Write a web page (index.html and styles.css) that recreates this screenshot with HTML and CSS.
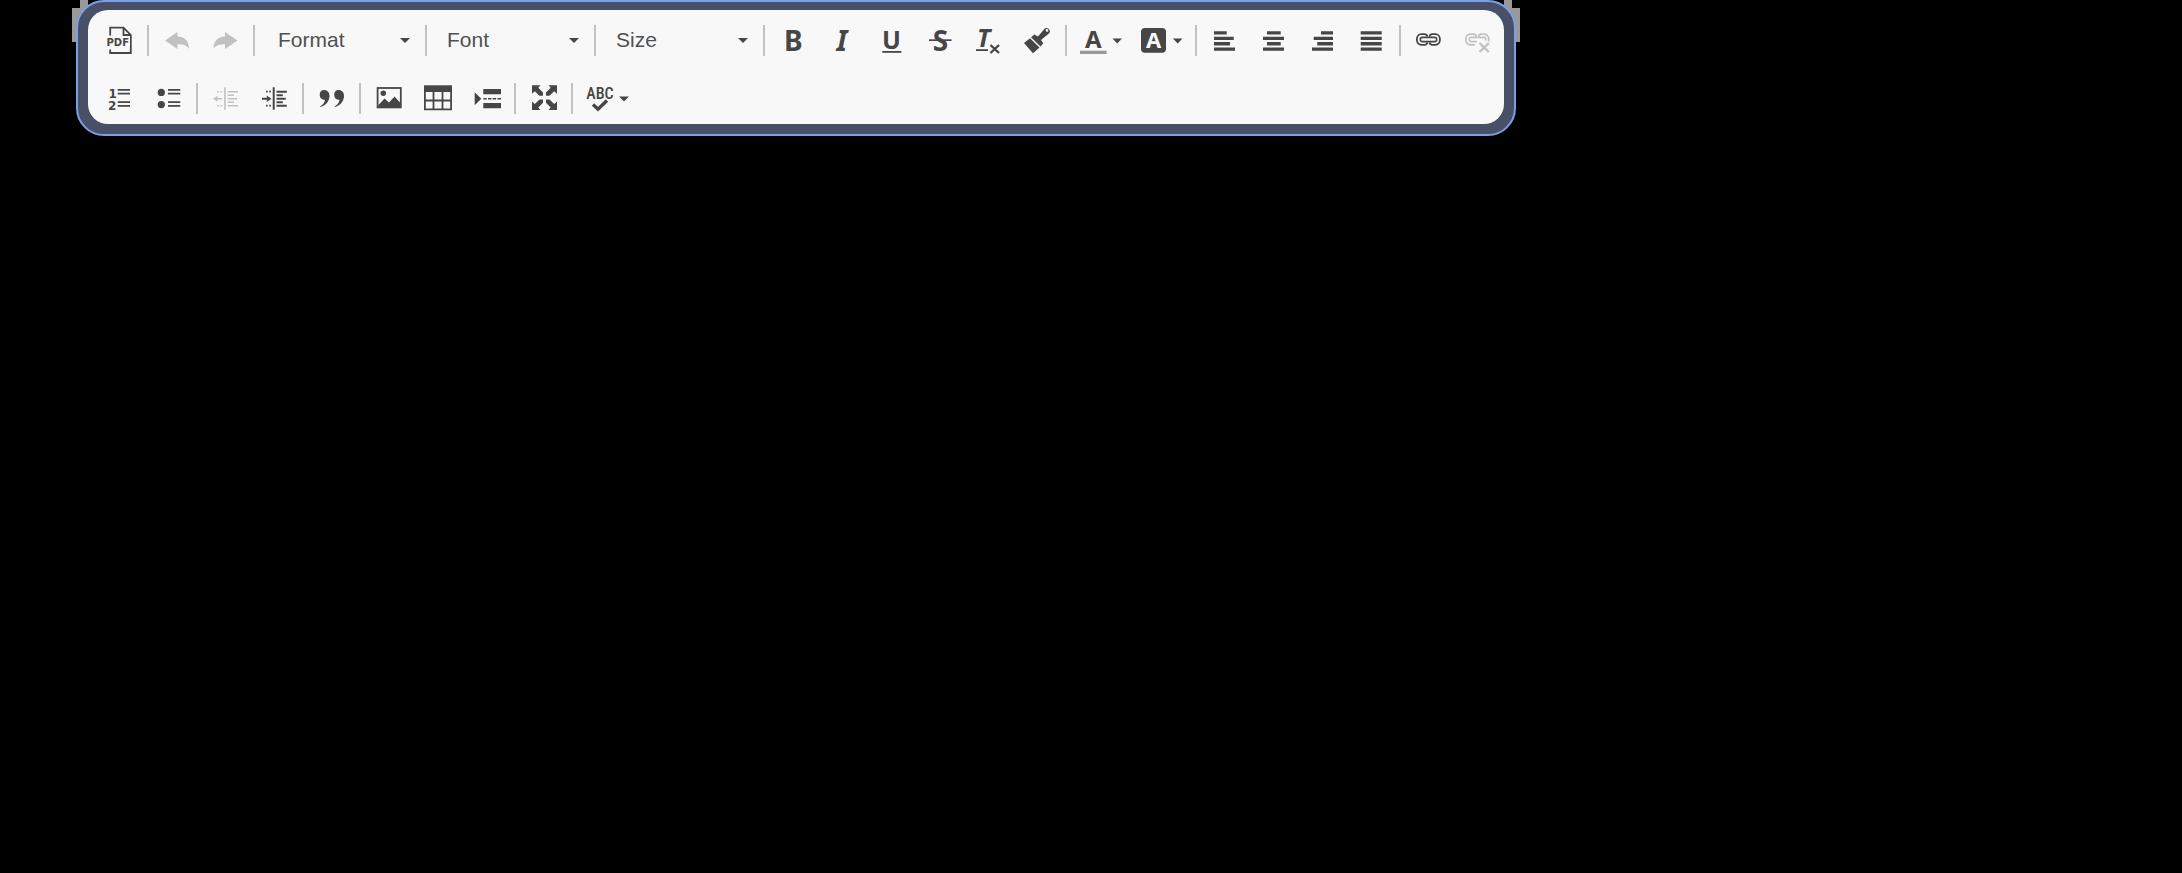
FILE: index.html
```html
<!DOCTYPE html>
<html lang="en">
<head>
<meta charset="utf-8">
<title>Editor toolbar</title>
<link rel="stylesheet" href="styles.css">
</head>
<body>
<main class="stage">
<div class="frame">
<div class="toolbar" role="toolbar" aria-label="Editor toolbar">
<div class="row">
<button class="btn" aria-label="Export to PDF"><svg viewBox="0 0 49 44"><path class="line" d="M15.2 17.500V9.600H28.500L35.800 17V35H15.200V31.500M28.500 9.600V17H35.800"/><path class="gap" d="M33 19.500H38V28.500H33Z"/><text x="11.500" y="27.700" class="t-pdf">PDF</text><path d="M35 19H36.700V29H35Z"/></svg></button>
<span class="sep"></span>
<button class="btn" disabled aria-label="Undo"><svg viewBox="0 0 49 44"><path d="M13 22.500L25.500 14V18.500C32 18.500 37 22.500 37 31C34.500 27 30.500 26.300 25.500 26.300V31Z"/></svg></button>
<button class="btn" disabled aria-label="Redo"><svg viewBox="0 0 49 44"><path d="M36.500 22.500L24 14V18.500C17.500 18.500 12.500 22.500 12.500 31C15 27 19 26.300 24 26.300V31Z"/></svg></button>
<span class="sep"></span>
<div class="combo first"><select aria-label="Format"><option>Format</option></select><svg class="caret" viewBox="0 0 10 5"><path d="M0 0H10L5 5Z"/></svg></div>
<span class="sep"></span>
<div class="combo"><select aria-label="Font"><option>Font</option></select><svg class="caret" viewBox="0 0 10 5"><path d="M0 0H10L5 5Z"/></svg></div>
<span class="sep"></span>
<div class="combo"><select aria-label="Size"><option>Size</option></select><svg class="caret" viewBox="0 0 10 5"><path d="M0 0H10L5 5Z"/></svg></div>
<span class="sep"></span>
<button class="btn" aria-label="Bold"><svg viewBox="0 0 49 44"><text x="16" y="32.500" class="t-b">B</text></svg></button>
<button class="btn" aria-label="Italic"><svg viewBox="0 0 49 44"><text x="19.500" y="32.500" class="t-b t-i">I</text></svg></button>
<button class="btn" aria-label="Underline"><svg viewBox="0 0 49 44"><text x="25.500" y="30.500" text-anchor="middle" class="t-u">U</text><path d="M16.300 33H35.300V34.800H16.300Z"/></svg></button>
<button class="btn" aria-label="Strikethrough"><svg viewBox="0 0 49 44"><text x="25.500" y="32.500" text-anchor="middle" class="t-b">S</text><path d="M14 21.300H36.500V23H14Z"/></svg></button>
<button class="btn" aria-label="Remove format"><svg viewBox="0 0 49 44"><text x="13" y="29" class="t-u t-i">T</text><path d="M12 31.200H24V33H12Z"/><path class="thick" d="M26.500 27L35 35M35 27L26.500 35"/></svg></button>
<button class="btn" aria-label="Copy formatting"><svg viewBox="0 0 49 44"><path d="M11 25L17 20.300L26.500 29.500L20 35.300Z"/><path d="M18 19.300L21.500 16.500L25 18.600L31.800 10.500A3.400 3.400 0 0 1 36.500 15L28 22L30.300 25.300L27.500 28.600Z"/><circle class="gap" cx="34" cy="12.400" r="1.300"/></svg></button>
<span class="sep"></span>
<button class="btn wide" aria-label="Text color"><svg viewBox="0 0 61 44"><text x="23.300" y="29.500" text-anchor="middle" class="t-a">A</text><path class="swatch" d="M10 32.700H36.700V36H10Z"/><path d="M42.500 20.500H52L47.200 25.500Z"/></svg></button>
<button class="btn wide" aria-label="Background color"><svg viewBox="0 0 61 44"><rect x="10" y="10" width="25" height="24.700" rx="4"/><text x="22.500" y="30.300" text-anchor="middle" class="t-bg">A</text><path d="M42 20.500H51.500L46.700 25.500Z"/></svg></button>
<span class="sep"></span>
<button class="btn" aria-label="Align left"><svg viewBox="0 0 49 44"><path d="M14 13.300h12.700v3.300H14zM14 18.800h19.700v3.300H14zM14 24.100h16v3.300H14zM14 29.400h21v3.300H14z"/></svg></button>
<button class="btn" aria-label="Center"><svg viewBox="0 0 49 44"><path d="M18 13.300h13.700v3.300H18zM14 18.800h21v3.300H14zM18 24.100h13.700v3.300H18zM14 29.400h21v3.300H14z"/></svg></button>
<button class="btn" aria-label="Align right"><svg viewBox="0 0 49 44"><path d="M23 13.300h12v3.300H23zM15.700 18.800H35v3.300H15.700zM19.300 24.100H35v3.300H19.300zM14 29.400h21v3.300H14z"/></svg></button>
<button class="btn" aria-label="Justify"><svg viewBox="0 0 49 44"><path d="M13.700 13.300h21v3.300h-21zM13.700 18.800h21v3.300h-21zM13.700 24.100h21v3.300h-21zM13.700 29.400h21v3.300h-21z"/></svg></button>
<span class="sep"></span>
<button class="btn" aria-label="Link"><svg viewBox="0 0 49 44"><path class="line" d="M23.300 18.500C23 16.800 22 16.200 20.500 16.200H17.500C11.300 16.200 11.300 26.800 17.500 26.800H20.500C22 26.800 23 26.200 23.300 24.500M25.500 18.500C25.800 16.800 26.800 16.200 28.300 16.200H31.300C37.500 16.200 37.500 26.800 31.300 26.800H28.300C26.800 26.800 25.800 26.200 25.500 24.500"/><rect class="bar" x="16.300" y="19.400" width="16.400" height="4.200" rx="2"/></svg></button>
<button class="btn" disabled aria-label="Unlink"><svg viewBox="0 0 49 44"><path class="line" d="M23.300 18.500C23 16.800 22 16.200 20.500 16.200H17.500C11.300 16.200 11.300 26.800 17.500 26.800H22M25.500 18.500C25.800 16.800 26.800 16.200 28.300 16.200H31.300C35 16.200 36.500 20 35.500 23.500"/><path class="bar" d="M24 23.600H18.300C15.700 23.600 15.700 19.400 18.300 19.400H30.700C32.700 19.400 33 21 32.500 22.500"/><path class="thick" d="M26.500 25L35.800 34M35.800 25L26.500 34"/></svg></button>
</div>
<div class="row">
<button class="btn" aria-label="Numbered list"><svg viewBox="0 0 49 44"><text x="13.500" y="22" class="t-n">1</text><text x="13" y="34" class="t-n">2</text><path d="M22.700 13H35v1.700H22.700zM22.700 16.800H35v1.700H22.700zM22.700 25.200H35v1.700H22.700zM22.700 29H35v1.700H22.700z"/></svg></button>
<button class="btn" aria-label="Bulleted list"><svg viewBox="0 0 49 44"><circle cx="17.300" cy="16.400" r="3.600"/><circle cx="17.300" cy="28.600" r="3.600"/><path d="M24 13h12.300v1.700H24zM24 16.800h12.300v1.700H24zM24 25.200h12.300v1.700H24zM24 29h12.300v1.700H24z"/></svg></button>
<span class="sep"></span>
<button class="btn" disabled aria-label="Decrease indent"><svg viewBox="0 0 49 44"><path d="M23.200 11.300h1.600v22.400h-1.600zM26.700 15h10.300v1.500H26.700zM26.700 18.500h6.300v1.500H26.700zM26.700 22h9.300v1.500h-9.300zM26.700 25.500h6.300v1.500h-6.300zM26.700 29h10.300v1.500H26.700zM16.300 15h1.700v1.500h-1.700zM19.500 15h1.700v1.500h-1.700zM16.300 29h1.700v1.500h-1.700zM19.500 29h1.700v1.500h-1.700zM12 22.700l4.500-3v2.300H21v1.500h-4.500v2.300z"/></svg></button>
<button class="btn" aria-label="Increase indent"><svg viewBox="0 0 49 44"><path d="M22.700 11.300h2v22.400h-2zM26.500 14.700h10.300v2H26.500zM26.500 18.200h6.300v2h-6.300zM26.500 21.700h9.300v2h-9.300zM26.500 25.200h6.300v2h-6.300zM26.500 28.700h10.300v2H26.500zM16 14.800h1.700v1.800H16zM19.200 14.800h1.700v1.800h-1.700zM16 28.800h1.700v1.800H16zM19.200 28.800h1.700v1.800h-1.700zM21.500 22.700l-4.700-3.200v2.200H12v2h4.800v2.200z"/></svg></button>
<span class="sep"></span>
<button class="btn" aria-label="Block quote"><svg viewBox="0 0 49 44"><path d="M17 14C20.500 14 22.500 16.500 22.500 20C22.500 25 19 29.500 13.500 31L13.200 30.200C16 28.700 17.800 26.500 18 23.500C15 24.500 12.700 22 12.700 18.800C12.700 16 14.500 14 17 14ZM31.500 14C35 14 37 16.500 37 20C37 25 33.500 29.500 28 31L27.700 30.200C30.500 28.700 32.300 26.500 32.500 23.500C29.500 24.500 27.200 22 27.200 18.800C27.200 16 29 14 31.500 14Z"/></svg></button>
<span class="sep"></span>
<button class="btn" aria-label="Image"><svg viewBox="0 0 49 44"><rect class="line" x="13.600" y="12" width="23.200" height="19.400"/><circle cx="19.300" cy="17.300" r="2.700"/><path d="M14.500 29L20.500 22.500L25 26.500L30.500 20.500L36 26.500V31.500H14.500Z"/></svg></button>
<button class="btn" aria-label="Table"><svg viewBox="0 0 49 44"><path d="M11 9.300H39V16H11Z"/><path class="line" d="M11.900 15V33.300H38.100V15M12 24.500H38M20.500 15V33M29.500 15V33"/></svg></button>
<button class="btn" aria-label="Page break"><svg viewBox="0 0 49 44"><path d="M12.700 16.300L19.300 22.700L12.700 29.300ZM21.300 13H39v5.300H21.300zM21.300 27H39v5.200H21.300zM21.300 22h3.500v1.500h-3.500zM26 22h3.500v1.500H26zM30.700 22h3.500v1.500h-3.500zM35.500 22H39v1.500h-3.500z"/></svg></button>
<span class="sep"></span>
<button class="btn" aria-label="Maximize"><svg viewBox="0 0 49 44"><path d="M13 9.300H21.500L19.300 11.800L24 16.500V19.800H20.500L15.800 15.200L13 17.800ZM38 9.300H29.500L31.700 11.800L27 16.500V19.800H30.500L35.200 15.200L38 17.800ZM13 34H21.500L19.300 31.500L24 26.800V23.500H20.500L15.800 28.100L13 25.500ZM38 34H29.500L31.700 31.500L27 26.800V23.500H30.500L35.200 28.100L38 25.500Z"/></svg></button>
<span class="sep"></span>
<button class="btn wide" aria-label="Spell check"><svg viewBox="0 0 61 44"><text x="24" y="23" text-anchor="middle" class="t-abc">ABC</text><path class="check" d="M17 28.500L22 33.200L31 24.500"/><path d="M43 20.500H53L48 25.500Z"/></svg></button>
</div>
</div>
</div>
</main>
</body>
</html>
```
FILE: styles.css
```css
* { box-sizing: border-box; }

body {
  margin: 0;
  min-height: 100vh;
  background: #000;
  overflow: hidden;
  font-family: "Liberation Sans", Arial, sans-serif;
}

.stage {
  isolation: isolate;
  padding-left: 76px;
}

.frame {
  position: relative;
  width: fit-content;
  border: 2px solid #7d9fe8;
  border-radius: 28px;
  background: #485067;
  padding: 8px 10px 10px;
}

/* Grey corners of the panel that shows behind the frame */
.frame::before,
.frame::after {
  content: "";
  position: absolute;
  z-index: -1;
  top: 6px;
  width: 8px;
  height: 34px;
  background: #999;
}

.frame::before { left: -6px; box-shadow: 8px -8px 0 #999; }
.frame::after { right: -6px; box-shadow: -8px -8px 0 #999; }

.toolbar {
  display: flex;
  flex-direction: column;
  gap: 14px;
  padding: 8px 2px 4px 7px;
  border-radius: 20px;
  background: #f8f8f8;
}

.row { display: flex; align-items: center; }

.btn {
  flex: none;
  width: 49px;
  height: 44px;
  padding: 0;
  border: 0;
  background: none;
  color: #464646;
}

.btn.wide { width: 61px; }
.btn:disabled { color: #c1c1c1; }
.btn svg { display: block; width: 100%; height: 100%; fill: currentColor; }

.sep {
  flex: none;
  width: 2px;
  height: 31px;
  margin: 0 3px;
  background: #c2c2c2;
}

.combo { position: relative; flex: none; width: 161px; height: 44px; }
.combo.first { margin-left: 3px; }

.combo select {
  appearance: none;
  width: 100%;
  height: 100%;
  padding: 0 28px 2px 17px;
  border: 0;
  background: none;
  color: #505050;
  font: 21px "Liberation Sans", Arial, sans-serif;
}

.caret {
  position: absolute;
  top: 20px;
  right: 12px;
  width: 10px;
  height: 5px;
  fill: #464646;
  pointer-events: none;
}

.btn .line { fill: none; stroke: currentColor; stroke-width: 1.8; }
.btn .bar { fill: #f8f8f8; stroke: currentColor; stroke-width: 1.6; }
.btn .thick { fill: none; stroke: currentColor; stroke-width: 2.4; }
.btn .check { fill: none; stroke: currentColor; stroke-width: 3.4; }
.btn .gap { fill: #f8f8f8; }
.btn .swatch { fill: #999; }

.t-pdf { font: bold 10px "DejaVu Sans", sans-serif; }
.t-b { font: bold 28px "Noto Sans", sans-serif; }
.t-u { font: bold 25px "Noto Sans", sans-serif; }
.btn .t-i { font-style: italic; }
.t-a { font: bold 24px "Noto Sans", sans-serif; }
.t-bg { font: bold 22px "Noto Sans", sans-serif; fill: #f8f8f8; }
.t-n { font: bold 12px "DejaVu Sans", sans-serif; }
.t-abc { font: 500 16px "DejaVu Sans Condensed", "Roboto Condensed", sans-serif; font-family: "Roboto Condensed", "Liberation Sans Narrow", Roboto, sans-serif; }
```
